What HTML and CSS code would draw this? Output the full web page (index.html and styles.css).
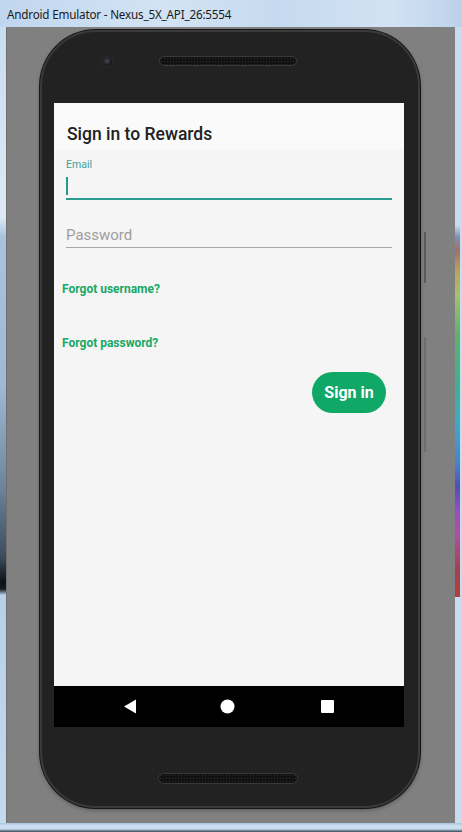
FILE: index.html
```html
<!DOCTYPE html>
<html>
<head>
<meta charset="utf-8">
<link rel="stylesheet" href="styles.css">
</head>
<body>
<div class="window">
  <div class="titlebar"><span class="title">Android Emulator - Nexus_5X_API_26:5554</span></div>
  <div class="frame-row">
    <div class="border-left"></div>
    <div class="stage">
      <div class="phone">
        <div class="bezel-top">
          <span class="camera"></span>
          <span class="speaker speaker-top"></span>
        </div>
        <div class="screen">
          <div class="appbar">Sign in to Rewards</div>
          <div class="content">
            <div class="field field-email">
              <div class="label">Email</div>
              <div class="input input-active"><span class="caret"></span></div>
            </div>
            <div class="field field-pass">
              <div class="input input-idle">Password</div>
            </div>
            <div class="link link-user">Forgot username?</div>
            <div class="link link-pass">Forgot password?</div>
            <div class="actions"><button class="btn-signin">Sign in</button></div>
          </div>
          <div class="navbar">
            <svg class="nav-icon" width="14" height="15" viewBox="0 0 14 15"><path d="M13 0.5 L13 14.5 L1 7.5 Z" fill="#fff"/></svg>
            <svg class="nav-icon" width="15" height="15" viewBox="0 0 15 15"><circle cx="7.5" cy="7.5" r="7" fill="#fff"/></svg>
            <svg class="nav-icon" width="13" height="13" viewBox="0 0 13 13"><rect x="0" y="0" width="13" height="13" rx="1" fill="#fff"/></svg>
          </div>
        </div>
        <div class="bezel-bottom">
          <span class="speaker speaker-bottom"></span>
        </div>
      </div>
      <div class="side-buttons">
        <span class="side-btn side-btn-1"></span>
        <span class="side-btn side-btn-2"></span>
      </div>
    </div>
    <div class="border-right"><span class="rainbow"></span></div>
  </div>
  <div class="border-bottom"></div>
</div>
</body>
</html>
```

FILE: styles.css
```css
* { box-sizing: border-box; }
html, body { margin: 0; padding: 0; }
body {
  width: 462px;
  height: 832px;
  overflow: hidden;
  background: #c8dbef;
  font-family: Roboto, "Noto Sans", sans-serif;
}
.window {
  width: 462px;
  height: 832px;
  display: flex;
  flex-direction: column;
}
.titlebar {
  height: 27px;
  flex: none;
  display: flex;
  align-items: center;
  padding-left: 7px;
  background: linear-gradient(to right, #c0d6ee 0%, #d3e3f4 35%, #c6daef 60%, #d2e2f3 85%, #bcd2ea 100%);
}
.title {
  font-family: "Noto Sans", "Open Sans", sans-serif;
  font-size: 11.7px;
  color: #1a1a1a;
  letter-spacing: -0.2px;
}
.frame-row {
  height: 796px;
  flex: none;
  display: flex;
}
.border-left {
  width: 6px;
  flex: none;
  background: linear-gradient(to bottom, #c9dcf0 0px, #dfe9f5 190px, #a9c3df 210px, #9fb9d5 360px, #6d849c 460px, #3d4c5c 530px, #0e1216 555px, #141a20 562px, #b7cfe9 568px, #c4d9ef 796px);
}
.border-right {
  width: 7px;
  flex: none;
  display: flex;
  padding-top: 198px;
  background: #c8dbef;
}
.rainbow {
  display: block;
  width: 5px;
  height: 372px;
  background: linear-gradient(to bottom, #cfd9e8 0px, #8090b8 12px, #a0706a 25px, #b8a060 45px, #a8c070 70px, #60b070 110px, #40b090 160px, #40a8c8 200px, #4a80c8 240px, #5050b0 260px, #9050c0 285px, #b050a0 310px, #a04050 345px, #b04040 370px);
}
.border-bottom {
  height: 9px;
  flex: none;
  background: linear-gradient(to bottom, #a9c4e0 0px, #cfe0f2 3px, #c6d9ee 6px, #5d7282 8px, #3c4a56 9px);
}
.stage {
  width: 449px;
  flex: none;
  background: #808080;
  border-left: 1px solid #6f6f6f;
  padding-left: 33px;
  padding-top: 3px;
  display: flex;
  align-items: flex-start;
}
.phone {
  width: 380px;
  height: 778px;
  flex: none;
  border-radius: 56px;
  background: #222222;
  border: 2px solid #3a3a3a;
  box-shadow: 0 0 0 1px #161616, 0 2px 4px rgba(0,0,0,0.35);
  padding-left: 12px;
  padding-right: 14px;
  display: flex;
  flex-direction: column;
}
.bezel-top {
  height: 71px;
  flex: none;
  display: flex;
  align-items: flex-start;
  padding-left: 49px;
  padding-top: 24px;
}
.camera {
  width: 9px;
  height: 9px;
  border-radius: 50%;
  margin-top: 1px;
  background: radial-gradient(circle at 45% 45%, #4a4a55 0, #1a1a1e 60%, #0c0c0c 100%);
  box-shadow: 0 0 0 1px #2c2c2c;
}
.speaker {
  display: block;
  border-radius: 6px;
  border: 1px solid #3a3a3a;
  background: radial-gradient(circle, #2e2e2e 0.7px, transparent 1px) 0 0 / 3px 3px, #111111;
}
.speaker-top {
  width: 138px;
  height: 10px;
  margin-left: 47px;
}
.screen {
  width: 350px;
  height: 624px;
  flex: none;
  display: flex;
  flex-direction: column;
  background: #f5f5f5;
}
.appbar {
  height: 47px;
  flex: none;
  background: #fafafa;
  padding-left: 13px;
  padding-top: 21px;
  font-size: 17.5px;
  line-height: 20px;
  font-weight: 500;
  color: #212121;
}
.content {
  flex: 1;
  display: flex;
  flex-direction: column;
}
.field {
  padding: 0 12px;
}
.label {
  margin-top: 9px;
  font-size: 10.5px;
  line-height: 12px;
  color: #3fa29a;
}
.input-active {
  height: 29px;
  border-bottom: 2px solid #2a9d93;
  padding-top: 6px;
}
.caret {
  display: block;
  width: 2px;
  height: 18px;
  background: #26998f;
}
.field-pass {
  margin-top: 22px;
}
.input-idle {
  padding-top: 4px;
  padding-bottom: 3px;
  font-size: 15px;
  line-height: 18px;
  color: #9e9e9e;
  border-bottom: 1px solid #a8a8a8;
}
.link {
  padding-left: 8px;
  font-size: 12px;
  line-height: 14px;
  font-weight: 700;
  color: #17a865;
}
.link-user { margin-top: 34px; }
.link-pass { margin-top: 40px; }
.actions {
  display: flex;
  justify-content: flex-end;
  padding-right: 18px;
  margin-top: 22px;
}
.btn-signin {
  width: 74px;
  height: 41px;
  border: none;
  border-radius: 21px;
  background: #10a866;
  color: #ffffff;
  font-family: Roboto, sans-serif;
  font-size: 16px;
  font-weight: 700;
  padding: 0;
}
.navbar {
  height: 41px;
  flex: none;
  background: #000000;
  display: flex;
  align-items: center;
  padding-left: 69px;
}
.nav-icon { display: block; flex: none; }
.nav-icon:nth-child(2) { margin-left: 83px; }
.nav-icon:nth-child(3) { margin-left: 86px; }
.bezel-bottom {
  flex: 1;
  display: flex;
  justify-content: flex-start;
  padding-left: 104px;
  padding-top: 46px;
}
.speaker-bottom {
  width: 140px;
  height: 11px;
}
.side-buttons {
  display: flex;
  flex-direction: column;
  margin-left: 4px;
  padding-top: 202px;
}
.side-btn {
  display: block;
  width: 2px;
}
.side-btn-1 {
  height: 51px;
  background: #5a5a5a;
}
.side-btn-2 {
  height: 115px;
  margin-top: 54px;
  background: #6e6e6e;
}
```
